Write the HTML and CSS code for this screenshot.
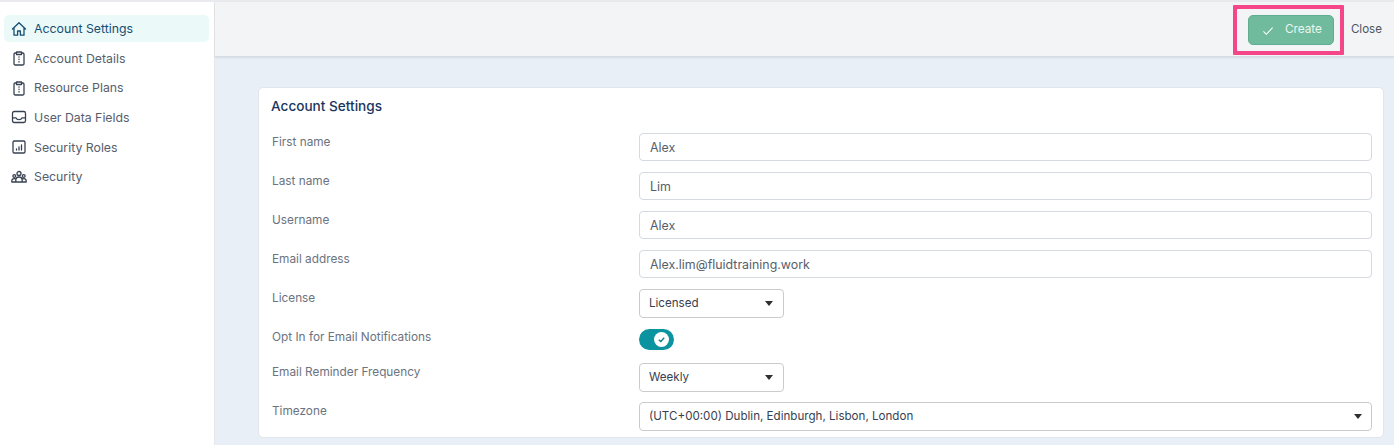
FILE: index.html
```html
<!DOCTYPE html>
<html lang="en">
<head>
<meta charset="utf-8">
<title>Account Settings</title>
<link rel="stylesheet" href="styles.css">
</head>
<body>
<div class="app">
  <aside class="sidebar">
    <nav class="nav">
      <a class="nav-item active">
        <svg class="nav-icon" viewBox="0 0 16 16"><path d="M1.500 8 8 1.800 14.500 8M3 6.800V14.200h3.600V10h2.800v4.200H13V6.800"/></svg>
        <span>Account Settings</span>
      </a>
      <a class="nav-item">
        <svg class="nav-icon" viewBox="0 0 16 16"><path d="M5.500 3H4.200A1.200 1.200 0 0 0 3 4.200v9.600A1.200 1.200 0 0 0 4.200 15h7.600a1.200 1.200 0 0 0 1.200-1.200V4.200A1.200 1.200 0 0 0 11.800 3H10.500M5.500 2h5v2.500h-5zM8 6.800v.4M8 9.200v.4M8 11.600v.4"/></svg>
        <span>Account Details</span>
      </a>
      <a class="nav-item">
        <svg class="nav-icon" viewBox="0 0 16 16"><path d="M5.500 3H4.200A1.200 1.200 0 0 0 3 4.200v9.600A1.200 1.200 0 0 0 4.200 15h7.600a1.200 1.200 0 0 0 1.200-1.200V4.200A1.200 1.200 0 0 0 11.800 3H10.500M5.500 2h5v2.500h-5zM8 6.800v.4M8 9.200v.4M8 11.600v.4"/></svg>
        <span>Resource Plans</span>
      </a>
      <a class="nav-item">
        <svg class="nav-icon" viewBox="0 0 16 16"><path d="M3.200 2.500h9.600a1.700 1.700 0 0 1 1.700 1.700v7.600a1.700 1.700 0 0 1-1.700 1.700H3.200a1.700 1.700 0 0 1-1.700-1.700V4.200a1.700 1.700 0 0 1 1.700-1.700zM1.500 8.800h3.400c.5 1.200 1.600 1.900 3.100 1.900s2.600-.7 3.100-1.900h3.400"/></svg>
        <span>User Data Fields</span>
      </a>
      <a class="nav-item">
        <svg class="nav-icon" viewBox="0 0 16 16"><path d="M3.200 2h9.600A1.200 1.200 0 0 1 14 3.200v9.600a1.200 1.200 0 0 1-1.200 1.200H3.200A1.200 1.200 0 0 1 2 12.800V3.200A1.200 1.200 0 0 1 3.200 2zM5.500 11V10M8 11V8M10.500 11V6"/></svg>
        <span>Security Roles</span>
      </a>
      <a class="nav-item">
        <svg class="nav-icon" viewBox="0 0 16 16"><circle cx="8" cy="4.500" r="2"/><circle cx="3.300" cy="7" r="1.400"/><circle cx="12.700" cy="7" r="1.400"/><path d="M4.800 13v-1.800a3.200 3.200 0 0 1 6.400 0V13zM.8 13v-1.200a2.300 2.300 0 0 1 3.500-1.900M15.200 13v-1.200a2.300 2.300 0 0 0-3.500-1.900M.8 13h14.400"/></svg>
        <span>Security</span>
      </a>
    </nav>
  </aside>
  <div class="content">
    <header class="toolbar">
      <div class="highlight">
        <button class="btn-create" type="button">
          <svg class="check" viewBox="0 0 14 12"><path d="M1.500 6.500 5 10l7.500-8"/></svg>
          <span class="btn-label">Create</span>
        </button>
      </div>
      <a class="btn-close">Close</a>
    </header>
    <main class="main">
      <section class="card">
        <h2 class="card-title">Account Settings</h2>
        <div class="form">
          <div class="row"><label class="label">First name</label><div class="input">Alex</div></div>
          <div class="row"><label class="label">Last name</label><div class="input">Lim</div></div>
          <div class="row"><label class="label">Username</label><div class="input">Alex</div></div>
          <div class="row"><label class="label">Email address</label><div class="input">Alex.lim@fluidtraining.work</div></div>
          <div class="row"><label class="label">License</label><div class="select short"><span>Licensed</span><i class="caret"></i></div></div>
          <div class="row row-toggle"><label class="label">Opt In for Email Notifications</label>
            <div class="toggle"><span class="knob"><svg viewBox="0 0 10 10"><path d="M2 5.200 4.200 7.200 8 3"/></svg></span></div>
          </div>
          <div class="row"><label class="label">Email Reminder Frequency</label><div class="select short"><span>Weekly</span><i class="caret"></i></div></div>
          <div class="row"><label class="label">Timezone</label><div class="select wide"><span>(UTC+00:00) Dublin, Edinburgh, Lisbon, London</span><i class="caret"></i></div></div>
        </div>
      </section>
    </main>
  </div>
</div>
</body>
</html>
```
FILE: styles.css
```css
* { box-sizing: border-box; }
html, body { margin: 0; height: 100%; overflow: hidden; }
body {
  font-family: Inter, "Noto Sans", sans-serif;
  font-size: 12px;
  color: #4b5563;
  background: #fff;
}
.app {
  display: flex;
  height: 445px;
  border-top: 2px solid #e8eaee;
}
.sidebar {
  width: 215px;
  flex: none;
  background: #fff;
  border-right: 1px solid #e5e7eb;
  padding: 13px 5px 0 4px;
}
.nav { display: flex; flex-direction: column; }
.nav-item {
  display: flex;
  align-items: center;
  gap: 7px;
  height: 29.6px;
  padding-left: 7px;
  border-radius: 5px;
  font-size: 12.3px;
  color: #565e6b;
}
.nav-item.active {
  height: 27px;
  margin: 0 0 1.5px;
  background: #ebf9f9;
  color: #164e74;
}
.nav-icon {
  width: 16px;
  height: 16px;
  flex: none;
  fill: none;
  stroke: #374151;
  stroke-width: 1.3;
  stroke-linecap: round;
  stroke-linejoin: round;
}
.active .nav-icon { stroke: #164e74; }
.content { flex: 1; display: flex; flex-direction: column; min-width: 0; background: #e8eff7; }
.toolbar {
  height: 55px;
  flex: none;
  display: flex;
  align-items: center;
  justify-content: flex-end;
  padding-right: 12px;
  background: #f3f4f6;
  border-bottom: 1px solid #d8dce2;
  box-shadow: 0 1px 2px rgba(0,0,0,.08);
}
.highlight {
  display: flex;
  align-items: center;
  width: 111px;
  height: 50px;
  margin-top: 2px;
  margin-right: 7px;
  padding-left: 11px;
  border: 4px solid #f6468a;
  border-radius: 1px;
}
.btn-create {
  display: flex;
  align-items: center;
  width: 86px;
  height: 30px;
  padding: 0 0 0 13px;
  gap: 11px;
  background: #70bb9e;
  border: 1px solid #5fae90;
  border-radius: 5px;
  color: #e9f6f1;
  font: 11.8px Inter, sans-serif;
}
.btn-label { margin-top: -2px; }
.check {
  width: 12px;
  height: 10px;
  margin-top: 1px;
  fill: none;
  stroke: #fff;
  stroke-width: 1.3;
}
.btn-close { font-size: 11.6px; color: #4b5563; }
.main { flex: 1; padding: 30px 10px 0 43px; min-height: 0; }
.card {
  height: 351px;
  padding: 0 11px 0 12px;
  background: #fff;
  border: 1px solid #e2e6eb;
  border-radius: 5px;
}
.card-title {
  margin: 9px 0 0;
  font-size: 13.6px;
  line-height: 18px;
  font-weight: 500;
  color: #1a3560;
}
.form { display: flex; flex-direction: column; gap: 11px; margin-top: 11px; padding-top: 7px; }
.row {
  display: grid;
  grid-template-columns: 368px 1fr;
  min-height: 28px;
  align-items: start;
}
.row-toggle { min-height: 23px; margin-top: 1px; }
.row-toggle .label { margin-top: -1px; }
.label {
  padding-left: 1px;
  font-size: 11.8px;
  line-height: 18px;
  color: #6b7280;
}
.input, .select {
  display: flex;
  align-items: center;
  height: 28px;
  padding: 0 10px;
  background: #fff;
  border: 1px solid #d5d9e0;
  border-radius: 4px;
  font-size: 12.4px;
  color: #565e6b;
}
.select {
  height: 29px;
  margin-bottom: -1px;
  padding: 0 10px 1px 9px;
  justify-content: space-between;
  border-color: #c9cbcf;
  color: #374151;
  font-size: 11.6px;
}
.select.short { width: 145px; }
.select.wide { padding-right: 9px; }
.caret {
  width: 0;
  height: 0;
  border-left: 4px solid transparent;
  border-right: 4px solid transparent;
  border-top: 5px solid #2f2f33;
}
.toggle {
  display: flex;
  align-items: center;
  justify-content: flex-end;
  width: 35px;
  height: 21px;
  padding-right: 5px;
  background: #0b93a0;
  border-radius: 11px;
}
.knob {
  display: flex;
  align-items: center;
  justify-content: center;
  width: 15px;
  height: 15px;
  background: #fff;
  border-radius: 50%;
}
.knob svg {
  width: 9px;
  height: 9px;
  fill: none;
  stroke: #0b7f8c;
  stroke-width: 1.5;
}
```
